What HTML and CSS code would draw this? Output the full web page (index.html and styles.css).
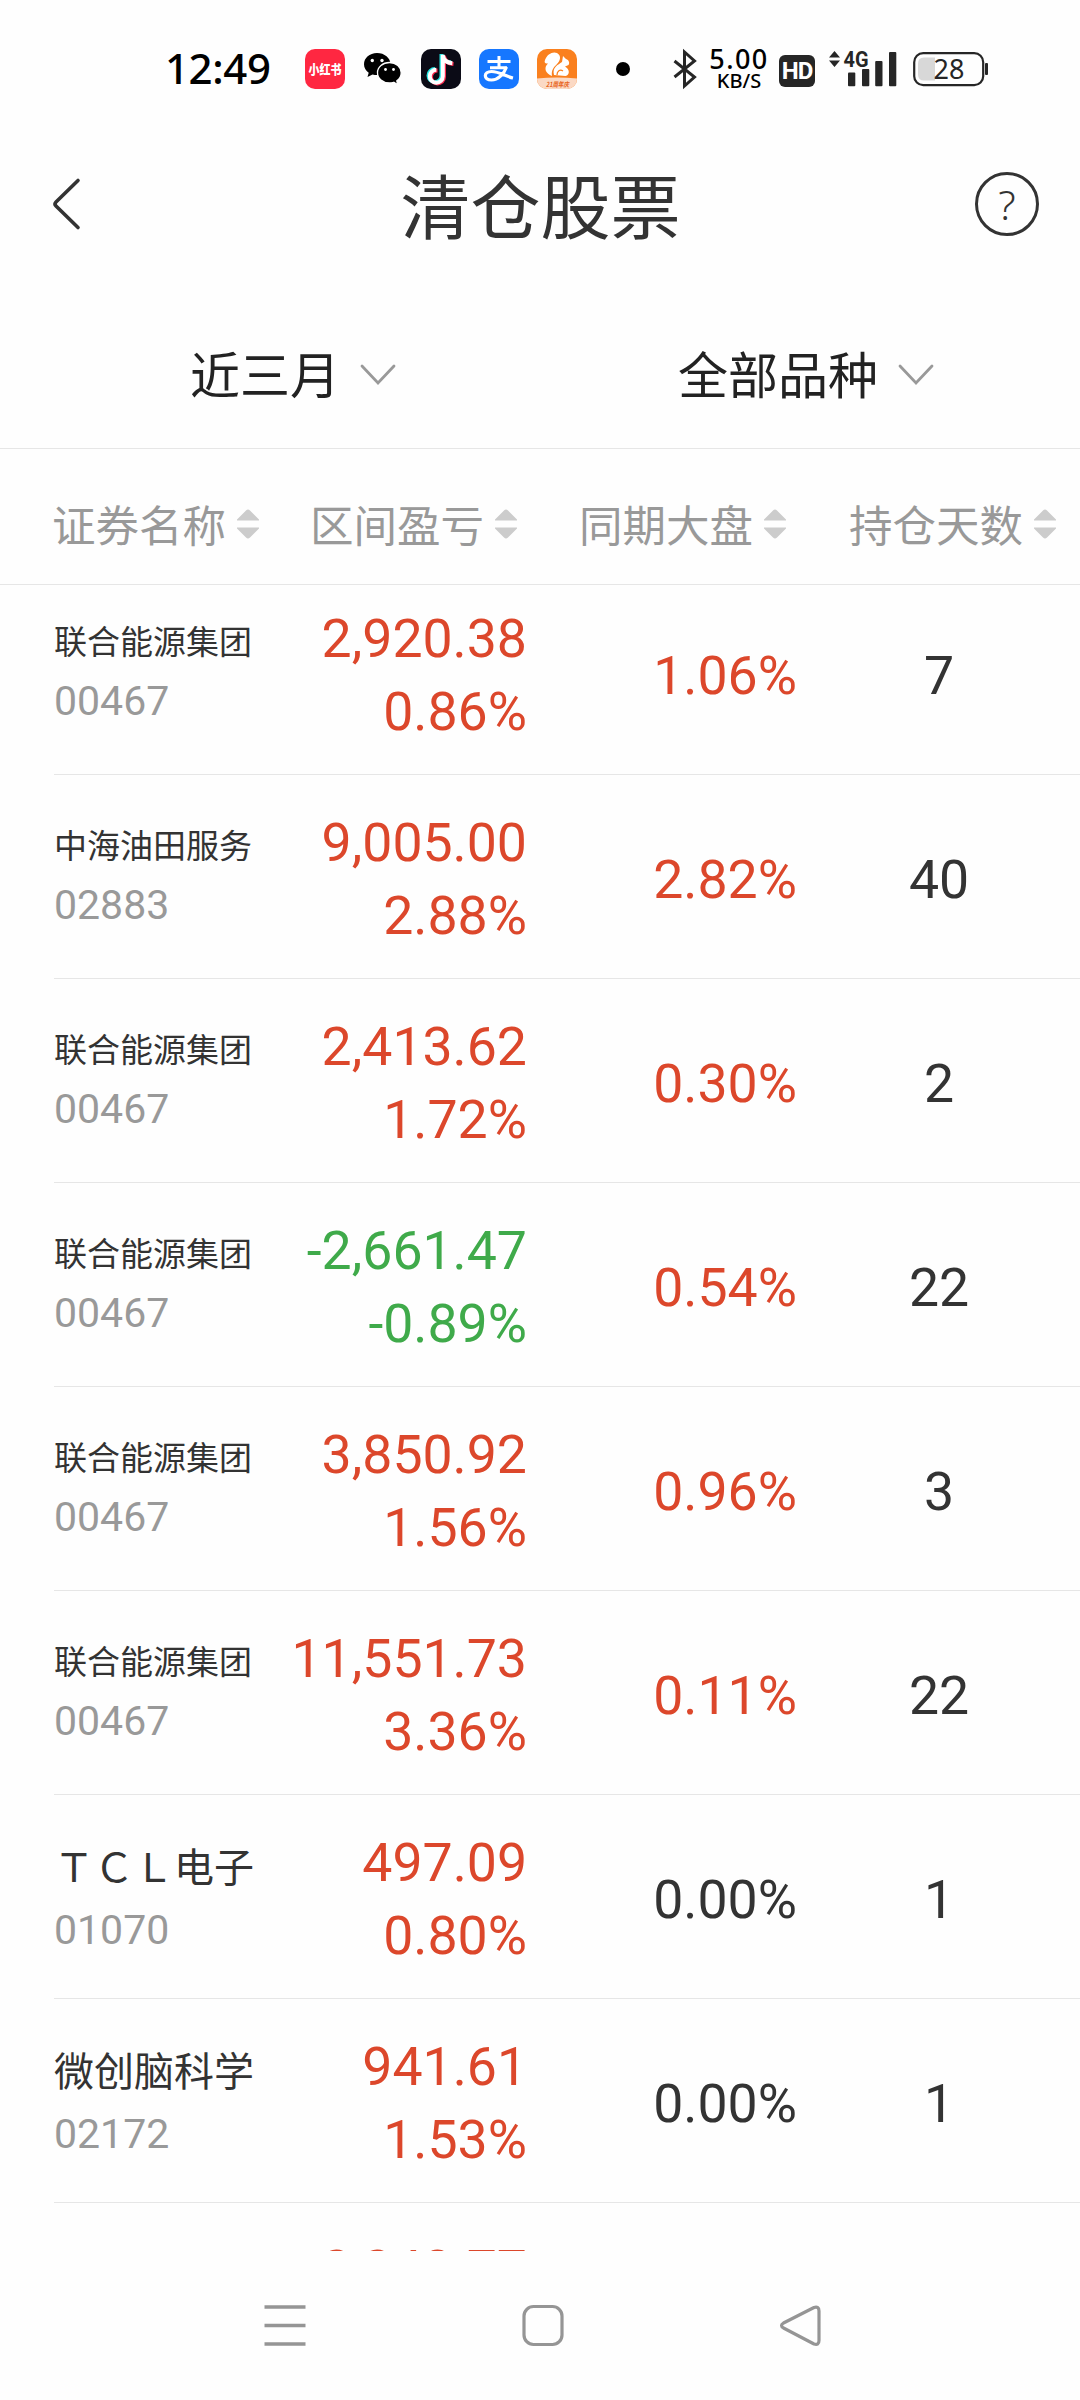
FILE: index.html
```html
<!DOCTYPE html>
<html lang="zh-CN">
<head>
<meta charset="utf-8">
<title>清仓股票</title>
<link rel="stylesheet" href="styles.css">
</head>
<body>
<div class="screen">
  <div class="status">
    <span class="clock">12:49</span>
    <div class="apps">
      <svg class="app" viewBox="0 0 40 40"><rect width="40" height="40" rx="10" fill="#ff2741"/><text class="xhs" x="3.500" y="25" textLength="33" lengthAdjust="spacingAndGlyphs">小红书</text></svg>
      <svg class="app" viewBox="0 0 40 40"><path d="M14 4C6.500 4 1 9 1 15.200c0 3.500 1.800 6.500 4.700 8.500L4.500 28l5-2.600c1.500.4 3 .6 4.500.6 7.500 0 13.500-4.500 13.500-10.800S21.500 4 14 4z"/><path d="M26.500 13.500c-6.800 0-12 4.600-12 10.200s5.200 10.300 12 10.300c1.500 0 3-.3 4.300-.7l4 2.500-1-3.900c2.700-1.900 4.400-4.800 4.400-8.200 0-5.600-5-10.200-11.700-10.200z" stroke="#fff" stroke-width="1.300"/><g fill="#fff"><circle cx="9.300" cy="11.500" r="1.700"/><circle cx="19" cy="11.500" r="1.700"/><circle cx="22.500" cy="20.500" r="1.400"/><circle cx="30.500" cy="20.500" r="1.400"/></g></svg>
      <svg class="app" viewBox="0 0 40 40"><rect width="40" height="40" rx="10" fill="#0b0b16"/><g fill="none" stroke-width="4"><path d="M20.500 5v21.500a6.500 6.500 0 1 1-6.500-6.500M20.500 6c1 4.500 4 7 9.500 7.500" stroke="#25e6e2"/><path d="M23 6.500V28a6.500 6.500 0 1 1-6.500-6.500M23 7.500c1 4.500 4 7 9.500 7.500" stroke="#fb2c50"/><path d="M21.800 5.800v21.500a6.500 6.500 0 1 1-6.500-6.500M21.800 6.800c1 4.500 4 7 9.500 7.500" stroke="#fff"/></g></svg>
      <svg class="app" viewBox="0 0 40 40"><rect width="40" height="40" rx="10" fill="#1677ff"/><g fill="none" stroke="#fff"><path d="M8.500 12.500h23M20 7v11M11 18.800h17" stroke-width="3"/><path d="M27.500 18c-2.500 7-8.500 13-15 13-8.500 0-8-8.500 0-8.500C20 22.500 27 27.500 34 29" stroke-width="3.200"/></g></svg>
      <svg class="app" viewBox="0 0 40 40"><defs><clipPath id="uc"><rect width="40" height="40" rx="10"/></clipPath></defs><g clip-path="url(#uc)"><rect width="40" height="40" fill="#fa801e"/><path d="M0 29.500q20-2 40 0V40H0z" fill="#fbd9c4"/><path d="M15 27C9 25 6 19 11 14.500c-3 .5-4-1-3-3.500C10 5 16 2 20 4c5 3 3 8 0 11-3 3-6 6-5 12z" fill="#fff"/><path d="M17 26c-2-8 4-10 8-13l1-6 3 3c3 1 4 4 2.500 6L28 17.500c5 3 5 8.500.5 9.500z" fill="#fff"/><path d="M20 26c0-4 3-6 6-4" fill="none" stroke="#fa801e" stroke-width="1.300"/><text class="uc-tag" x="9" y="37.500" textLength="23" lengthAdjust="spacingAndGlyphs">21周年庆</text></g></svg>
    </div>
    <span class="dot"></span>
    <svg class="bt" viewBox="0 0 24 38"><path d="M1.500 11l20 16L11.500 36V2l10 9L1.500 27" fill="none" stroke="#262626" stroke-width="3"/></svg>
    <div class="speed"><span class="rate">5.00</span><span class="unit">KB/S</span></div>
    <span class="hd">HD</span>
    <svg class="signal" viewBox="0 0 68 40"><g fill="#262626"><path d="M0 8.500L5.500 2 11 8.500zM0 11.500h11L5.500 18z"/><text class="net" x="14.500" y="17.500" textLength="25" lengthAdjust="spacingAndGlyphs">4G</text><rect x="19" y="23.500" width="7.300" height="13.700" rx="1"/><rect x="33" y="20" width="7.300" height="17.200" rx="1"/><rect x="46.200" y="12" width="7.300" height="25.200" rx="1"/><rect x="60" y="3" width="7.300" height="34.200" rx="1"/></g></svg>
    <svg class="battery" viewBox="0 0 76 36"><rect x="1.200" y="2.200" width="69" height="32" rx="9" fill="none" stroke="#262626" stroke-width="2.200"/><path d="M22 6.500H11q-6 0-6 6v11q0 6 6 6h11z" fill="#d8d8d8"/><rect x="72" y="12" width="3" height="12" rx="1" fill="#262626"/><text class="level" x="36" y="28">28</text></svg>
  </div>

  <div class="titlebar">
    <svg class="back" viewBox="0 0 32 54"><path d="M28 3.500L6 25q-2 2 0 4l22 21.500" fill="none" stroke="#333" stroke-width="3.600" stroke-linecap="round"/></svg>
    <h1 class="title">清仓股票</h1>
    <span class="help">?</span>
  </div>

  <div class="filters">
    <div class="filter">近三月<svg class="chev" viewBox="0 0 36 22"><path d="M2 2l16 17L34 2" fill="none" stroke="#999" stroke-width="2.800" stroke-linecap="round"/></svg></div>
    <div class="filter">全部品种<svg class="chev" viewBox="0 0 36 22"><path d="M2 2l16 17L34 2" fill="none" stroke="#999" stroke-width="2.800" stroke-linecap="round"/></svg></div>
  </div>

  <div class="cols">
    <span class="col">证券名称<svg class="sort" viewBox="0 0 22 30"><path d="M0 10.500L9 1.500q2-2 4 0l9 9v1H0zM0 18.500h22v1l-9 9q-2 2-4 0l-9-9z"/></svg></span>
    <span class="col">区间盈亏<svg class="sort" viewBox="0 0 22 30"><path d="M0 10.500L9 1.500q2-2 4 0l9 9v1H0zM0 18.500h22v1l-9 9q-2 2-4 0l-9-9z"/></svg></span>
    <span class="col">同期大盘<svg class="sort" viewBox="0 0 22 30"><path d="M0 10.500L9 1.500q2-2 4 0l9 9v1H0zM0 18.500h22v1l-9 9q-2 2-4 0l-9-9z"/></svg></span>
    <span class="col">持仓天数<svg class="sort" viewBox="0 0 22 30"><path d="M0 10.500L9 1.500q2-2 4 0l9 9v1H0zM0 18.500h22v1l-9 9q-2 2-4 0l-9-9z"/></svg></span>
  </div>

  <div class="list">
    <div class="row"><div class="stock"><span class="name small">联合能源集团</span><span class="code">00467</span></div><div class="gain up"><span>2,920.38</span><span>0.86%</span></div><span class="index up">1.06%</span><span class="days">7</span></div>
    <div class="row"><div class="stock"><span class="name small">中海油田服务</span><span class="code">02883</span></div><div class="gain up"><span>9,005.00</span><span>2.88%</span></div><span class="index up">2.82%</span><span class="days">40</span></div>
    <div class="row"><div class="stock"><span class="name small">联合能源集团</span><span class="code">00467</span></div><div class="gain up"><span>2,413.62</span><span>1.72%</span></div><span class="index up">0.30%</span><span class="days">2</span></div>
    <div class="row"><div class="stock"><span class="name small">联合能源集团</span><span class="code">00467</span></div><div class="gain down"><span>-2,661.47</span><span>-0.89%</span></div><span class="index up">0.54%</span><span class="days">22</span></div>
    <div class="row"><div class="stock"><span class="name small">联合能源集团</span><span class="code">00467</span></div><div class="gain up"><span>3,850.92</span><span>1.56%</span></div><span class="index up">0.96%</span><span class="days">3</span></div>
    <div class="row"><div class="stock"><span class="name small">联合能源集团</span><span class="code">00467</span></div><div class="gain up"><span>11,551.73</span><span>3.36%</span></div><span class="index up">0.11%</span><span class="days">22</span></div>
    <div class="row"><div class="stock"><span class="name">ＴＣＬ电子</span><span class="code">01070</span></div><div class="gain up"><span>497.09</span><span>0.80%</span></div><span class="index">0.00%</span><span class="days">1</span></div>
    <div class="row"><div class="stock"><span class="name">微创脑科学</span><span class="code">02172</span></div><div class="gain up"><span>941.61</span><span>1.53%</span></div><span class="index">0.00%</span><span class="days">1</span></div>
    <div class="row"><div class="stock"></div><div class="gain up"><span>2,240.77</span></div></div>
  </div>

  <div class="nav">
    <svg class="key" viewBox="0 0 44 44"><path d="M1.500 4h41M1.500 22.500h41M1.500 41h41" stroke="#959595" stroke-width="3.400"/></svg>
    <svg class="key" viewBox="0 0 44 44"><rect x="3" y="3.500" width="38" height="38" rx="9.500" fill="none" stroke="#959595" stroke-width="3.200"/></svg>
    <svg class="key" viewBox="0 0 44 44"><path d="M35 4.500L4.500 20q-4 2.500 0 5L35 41q5 1.500 5-3.500V8q0-5-5-3.500z" fill="none" stroke="#959595" stroke-width="3.200" stroke-linejoin="round"/></svg>
  </div>
</div>
</body>
</html>
```
FILE: styles.css
```css
* { box-sizing: border-box; }

body {
  margin: 0;
  background: #fefefe;
  color: #333;
  font-family: Roboto, "Noto Sans CJK SC", sans-serif;
}

svg { display: block; flex: none; overflow: visible; }

.screen {
  display: flex;
  flex-direction: column;
  width: 1080px;
  height: 2400px;
  overflow: hidden;
}

/* status bar */
.status {
  display: flex;
  align-items: center;
  height: 138px;
  padding-left: 165px;
  color: #000;
}
.clock {
  width: 140px;
  margin-bottom: 2px;
  font: 500 42px/60px "Noto Sans", sans-serif;
  letter-spacing: -0.4px;
}
.apps { display: flex; gap: 18px; }
.app { width: 40px; height: 40px; }
.xhs { font: 900 13px "Noto Sans CJK SC", sans-serif; fill: #fff; }
.uc-tag { font: italic 700 7px "Noto Sans CJK SC", sans-serif; fill: #e8641b; }
.dot {
  width: 14px;
  height: 14px;
  margin-left: 39px;
  border-radius: 50%;
  background: #000;
}
.bt { width: 24px; height: 38px; margin-left: 43px; }
.speed {
  display: flex;
  flex-direction: column;
  align-items: center;
  width: 62px;
  margin-left: 11px;
  font-family: "Noto Sans", sans-serif;
  font-weight: 500;
}
.rate { font-size: 27px; line-height: 22px; letter-spacing: 1.4px; }
.unit { font-size: 20px; line-height: 18px; margin-top: 2px; }
.hd {
  width: 36px;
  height: 32px;
  margin: 3px 14px 0 9px;
  border-radius: 6px;
  background: #262626;
  color: #fff;
  font: 700 24px/32px Roboto, sans-serif;
  letter-spacing: -1px;
  text-align: center;
}
.signal { width: 68px; height: 40px; }
.net { font: 700 22px Roboto, sans-serif; }
.battery { width: 76px; height: 36px; margin-left: 16px; }
.level { font: 400 27px "Noto Sans", sans-serif; fill: #262626; text-anchor: middle; }

/* title bar */
.titlebar {
  display: flex;
  align-items: center;
  justify-content: space-between;
  height: 132px;
  padding: 0 41px 0 50px;
}
.back { width: 32px; height: 54px; }
.title {
  margin: 12px 0 0 24px;
  font-size: 70px;
  line-height: 90px;
  font-weight: 400;
}
.help {
  width: 64px;
  height: 64px;
  border: 3px solid #333;
  border-radius: 50%;
  font: 300 41px/58px "Noto Sans", sans-serif;
  text-align: center;
}

/* filters */
.filters {
  display: grid;
  grid-template-columns: 584px 496px;
  height: 179px;
  padding-top: 70px;
  border-bottom: 1px solid #e6e6e6;
  color: #222;
  font-size: 50px;
  line-height: 74px;
}
.filter { display: flex; }
.filter:first-child { padding-left: 190px; }
.filter:last-child { padding-left: 94px; }
.chev { width: 36px; height: 22px; margin: 24px 0 0 20px; }

/* column headings */
.cols {
  display: grid;
  grid-template-columns: 258px 269px 270px 1fr;
  height: 136px;
  padding-left: 52px;
  border-bottom: 1px solid #e6e6e6;
  color: #999;
  font-size: 43.5px;
  line-height: 157px;
}
.col { display: flex; }
.sort { width: 22px; height: 30px; margin: 60px 0 0 11px; fill: #ccc; }

/* holdings */
.list {
  display: flex;
  flex-direction: column;
  height: 1666px;
  overflow: hidden;
}
.row {
  display: grid;
  grid-template-columns: 200px 273px 270px 1fr;
  flex: none;
  height: 204px;
  margin-left: 54px;
  border-bottom: 1px solid #e6e6e6;
  font-size: 53.6px;
}
.row:first-child { margin-top: -14px; }
.stock {
  display: flex;
  flex-direction: column;
  padding-top: 44px;
  white-space: nowrap;
}
.name { font-size: 40px; line-height: 60px; }
.name.small { font-size: 33px; line-height: 55px; }
.code { color: #999; font-size: 41px; line-height: 62px; }
.gain {
  display: flex;
  flex-direction: column;
  align-items: flex-end;
  padding-top: 31px;
  line-height: 73px;
}
.row:last-child .gain { padding-top: 30px; }
.index { text-align: right; line-height: 73px; padding-top: 68px; }
.days { width: 60px; margin-left: 112px; padding-top: 68px; line-height: 73px; text-align: center; }
.up { color: #dc472b; }
.down { color: #3faa4a; }

/* system navigation */
.nav {
  display: flex;
  align-items: center;
  justify-content: space-between;
  flex: 1;
  padding: 0 257px 1px 263px;
}
.key { width: 44px; height: 44px; }
```
